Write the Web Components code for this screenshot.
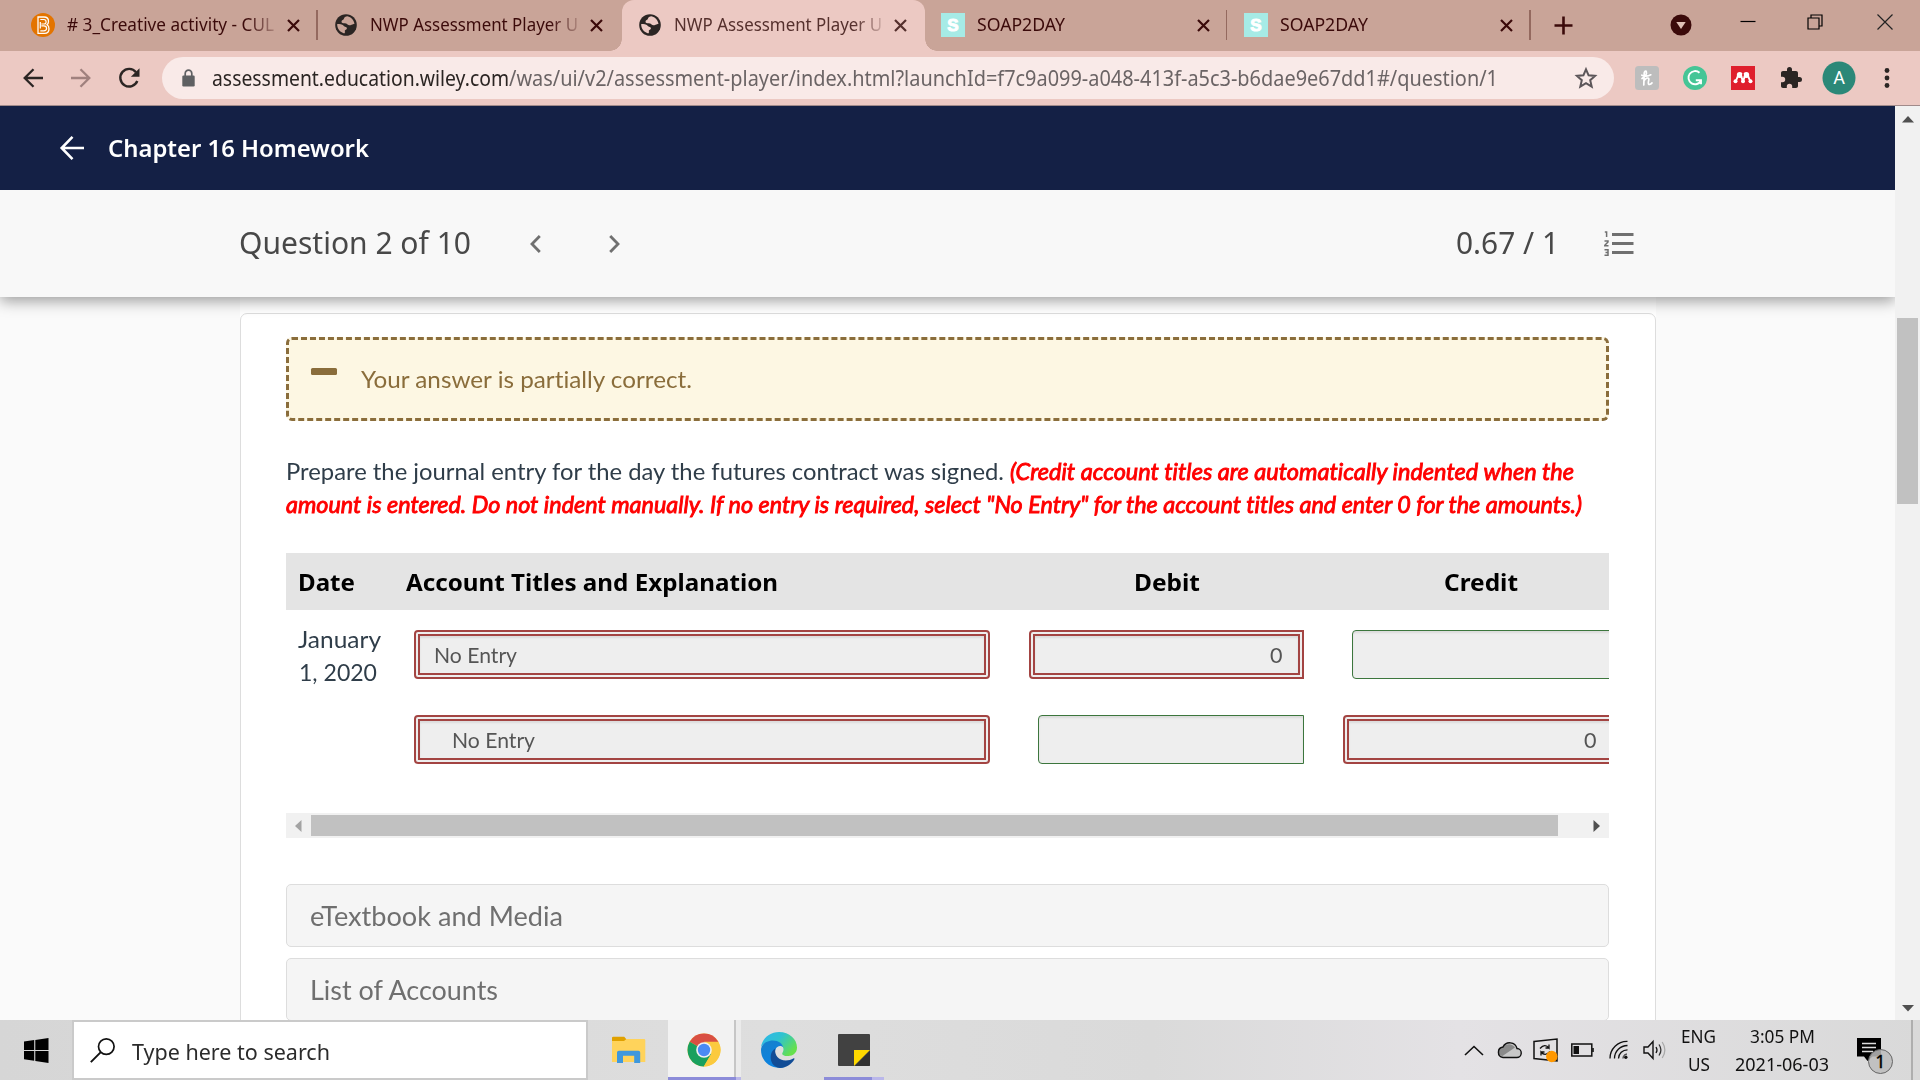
<!DOCTYPE html>
<html lang="en">
<head>
<meta charset="utf-8">
<title>NWP Assessment Player UI</title>
<style>
  body {
    margin: 0;
    width: 1920px;
    height: 1080px;
    overflow: hidden;
    display: flex;
    flex-direction: column;
    font-family: "Noto Sans", "Open Sans", sans-serif;
    background: #fafafa;
  }
  .viewport { display: flex; height: 914px; }
  .page {
    width: 1895px;
    height: 914px;
    overflow: hidden;
    display: flex;
    flex-direction: column;
  }
</style>
</head>
<body>

<tab-strip>
  <browser-tab icon="bfav" label="# 3_Creative activity - CUL" text-width="207" fade></browser-tab>
  <browser-tab icon="globe" label="NWP Assessment Player U" text-width="208" fade divider="none"></browser-tab>
  <browser-tab icon="globe" label="NWP Assessment Player U" text-width="208" fade active></browser-tab>
  <browser-tab icon="sfav" label="SOAP2DAY" text-width="88"></browser-tab>
  <browser-tab icon="sfav" label="SOAP2DAY" text-width="88"></browser-tab>
</tab-strip>
<tool-bar></tool-bar>

<div class="viewport">
  <div class="page">
    <app-header>Chapter 16 Homework</app-header>
    <question-bar></question-bar>
    <content-card>
      <result-alert>Your answer is partially correct.</result-alert>
      <question-text></question-text>
      <journal-table></journal-table>
      <accordion-panel label="eTextbook and Media" text-width="253"></accordion-panel>
      <accordion-panel label="List of Accounts" text-width="188"></accordion-panel>
    </content-card>
  </div>
  <page-scroll></page-scroll>
</div>

<task-bar></task-bar>

<script>
  // every icon is [width, height, svg body]
  const icons = {
    bfav: [24, 24, `<circle cx="12" cy="12" r="12" fill="#e37400"/>
      <path d="M7 4h6q4.500 0 4.500 4.300 0 2.500-1.500 3.400 2 1.200 2 4 0 4.600-4.500 4.600H7z" fill="none" stroke="#fff" stroke-width="1.300"/>
      <path d="M9.300 6.500h3.500q2.300 0 2.300 2.300t-2.300 2.200h-2.500M9.300 17.800h3.500q2.800 0 2.800-2.500t-2.800-2.500h-2.500M9.300 9v6.500" fill="none" stroke="#fff" stroke-width="1.200"/>`],
    globe: [24, 24, `<circle cx="12" cy="12" r="10.800" fill="#2b2523"/>
      <path d="M13.500 3.200c-2 .2-3.300 1-3.600 2.600-.2 1.200-2.200 1-2.400 2.600-.2 1.800 1.600 1.900 3.200 1.900 2.500 0 2.400 1.500 3.700 1.700 1.300.3 2 .6 2.500 0l3.600-1.300c-.6-3.700-3.300-6.700-7-7.500z" fill="var(--tab-bg,#c9a498)"/>
      <path d="M3.200 11c-.2 4.500 2.800 8.300 7 9.400l1-1.300c-1-1.200-.2-2 1-2.600 1-.5 1-2-.3-2.500-1.500-.5-2-.6-2.700-1.700C8.500 11.200 5.500 11 3.200 11z" fill="var(--tab-bg,#c9a498)"/>`],
    sfav: [24, 24, `<rect width="24" height="24" fill="#a6ebe6"/><text x="12" y="18.200" text-anchor="middle" font-family="Liberation Sans" font-size="17" font-weight="700" fill="#fff" stroke="#fff" stroke-width="1">S</text>`],
    close: [13, 13, `<path d="M1 1l11 11M12 1L1 12" stroke="currentColor" stroke-width="2.200"/>`],
    plus: [19, 19, `<path d="M9.500 .5v18M.5 9.500h18" stroke="#3b0a0a" stroke-width="2.600"/>`],
    search_tabs: [22, 22, `<circle cx="11" cy="11" r="10.500" fill="#3b0a0a"/><path d="M6.300 8h9.400L11 15z" fill="#dfc0b6"/>`],
    minimize: [16, 16, `<path d="M.5 7.500h15" stroke="#000" stroke-width="1.200"/>`],
    restore: [16, 16, `<path d="M1 4h11v11H1zM4 4V1h11v11h-3" fill="none" stroke="#000" stroke-width="1.200"/>`],
    win_close: [16, 16, `<path d="M.5 .5l15 15M15.500 .5l-15 15" stroke="#222" stroke-width="1.200"/>`],
    back: [20, 20, `<path d="M20 10H2M10.500 1.200L1.700 10l8.800 8.800" fill="none" stroke="currentColor" stroke-width="2.300"/>`],
    forward: [20, 20, `<path d="M0 10h18M9.500 1.200l8.800 8.800-8.800 8.800" fill="none" stroke="currentColor" stroke-width="2.300"/>`],
    reload: [22, 22, `<path d="M18 5.200A8.800 8.800 0 1 0 19.300 14" fill="none" stroke="#2b2523" stroke-width="2.400"/><path d="M21.500 1.200v8.600h-8.600z" fill="#2b2523"/>`],
    lock: [13, 18, `<rect x=".3" y="6.500" width="12.400" height="11" rx="1.200" fill="#5f6062"/><path d="M3.200 7V4.500a3.300 3.300 0 0 1 6.600 0V7" fill="none" stroke="#5f6062" stroke-width="1.700"/>`],
    star: [22, 22, `<path d="M11 2.300l2.600 6 6.500.6-4.900 4.300 1.500 6.400L11 16.200l-5.700 3.400 1.500-6.400-4.900-4.300 6.500-.6z" fill="none" stroke="#5c5659" stroke-width="2"/>`],
    honey: [24, 24, `<rect width="24" height="24" rx="3.500" fill="#bdbdbd"/><path d="M7 12.500c3-2 5-5 4.300-6.800-.6-1.200-1.800-.3-2.100 1.300L8.800 19M9 15c1-2.600 4.300-4 4.800-2.200.3 1.500-1.200 4-.3 5.300.8.800 2.500 0 3.500-1.200M6.800 9.200c3 1.300 7 .8 9-.4" fill="none" stroke="#fff" stroke-width="1.700" stroke-linecap="round"/>`],
    grammarly: [24, 24, `<circle cx="12" cy="12" r="12" fill="#45c596"/><path d="M16.500 6.800A6.600 6.600 0 1 0 18 14.500M12.800 14.300h5.200v4" fill="none" stroke="#fff" stroke-width="1.900"/>`],
    mendeley: [24, 24, `<rect width="24" height="24" fill="#df1f2d"/><g fill="#fff"><circle cx="8.700" cy="9" r="2.900"/><circle cx="15.300" cy="9" r="2.900"/><circle cx="4.500" cy="15.300" r="2"/><circle cx="12" cy="15.300" r="2"/><circle cx="19.500" cy="15.300" r="2"/></g><path d="M4.700 14.500C6.500 13.500 5.800 9.500 8.500 9.500c2.500 0 2 3.500 3.500 5 1.500-1.500 1-5 3.500-5 2.700 0 2 4 3.800 5" fill="none" stroke="#fff" stroke-width="1.900"/><circle cx="12" cy="9" r="1" fill="#df1f2d"/>`],
    puzzle: [24, 24, `<path d="M20.500 11H19V7c0-1.100-.9-2-2-2h-4V3.500a2.500 2.500 0 0 0-5 0V5H4c-1.100 0-2 .9-2 2v3.800h1.500a2.700 2.700 0 0 1 0 5.400H2V20c0 1.100.9 2 2 2h3.800v-1.500a2.700 2.700 0 0 1 5.400 0V22H17c1.100 0 2-.9 2-2v-4h1.500a2.500 2.500 0 0 0 0-5z" fill="#2b2523"/>`],
    avatar: [34, 34, `<circle cx="17" cy="17" r="16.500" fill="#2b8878"/><text x="17" y="23.300" text-anchor="middle" font-family="Roboto" font-size="18" fill="#fff">A</text>`],
    dots: [6, 22, `<g fill="#2b2523"><circle cx="3" cy="3.500" r="2.400"/><circle cx="3" cy="11" r="2.400"/><circle cx="3" cy="18.500" r="2.400"/></g>`],
    app_back: [24, 24, `<path d="M24 12H2M12.500 .9L1.700 12l10.800 11.100" fill="none" stroke="#fff" stroke-width="2.600"/>`],
    prev: [11, 18, `<path d="M9.800 1L2 9l7.800 8" fill="none" stroke="#707070" stroke-width="2.800"/>`],
    next: [11, 18, `<path d="M1.200 1L9 9l-7.800 8" fill="none" stroke="#707070" stroke-width="2.800"/>`],
    list: [30, 25, `<path d="M8 3.500h21.500M8 12.500h21.500M8 21.500h21.500" stroke="#707070" stroke-width="3"/>
      <path d="M.8 1h1.800v5M.5 10h3.500v1L.8 14.200v.6h3.700M.5 18.700h3.500v5.600H.5M1.500 21.500H4" fill="none" stroke="#707070" stroke-width="1.500"/>`],
    minus: [26, 7, `<rect width="26" height="7" rx="1.500" fill="#8a6d3b"/>`],
    windows: [25, 25, `<path d="M0 3.600l10.200-1.500v9.800H0zM11.300 2L24.500 0v11.900H11.300zM0 13h10.200v9.800L0 21.300zM11.300 13h13.200v12l-13.200-2z" fill="#000"/>`],
    find: [25, 25, `<circle cx="16.300" cy="8.600" r="7.800" fill="none" stroke="#111" stroke-width="1.700"/><path d="M10.800 14.200L.8 24.200" stroke="#111" stroke-width="1.900"/>`],
    explorer: [34, 28, `<path d="M0 2Q0 .8 1.200.8h11L15 4H33v21.500H0z" fill="#e0a100"/><path d="M0 5h12l2.500-2H32q1.300 0 1.300 1.300V26H0z" fill="#ffd35b"/><path d="M5 27V16.500q0-1.800 1.800-1.800h19.600q1.800 0 1.800 1.800V27h-6v-7.300H11V27z" fill="#3f98dd"/>`],
    chrome: [34, 34, `<circle cx="17" cy="17" r="16.500" fill="#fbca3e"/>
      <path d="M17 17L2.700 8.800A16.500 16.500 0 0 1 31.300 8.800z" fill="#d94f43"/>
      <path d="M2.700 8.800A16.500 16.500 0 0 0 16.800 33.500L24.200 21 17 17z" fill="#19a05e"/>
      <path d="M24.200 21L16.800 33.500A16.500 16.500 0 0 0 31.300 8.800H17z" fill="#fbca3e"/>
      <circle cx="17" cy="17" r="7.800" fill="#f1f1f1"/><circle cx="17" cy="17" r="6.200" fill="#4a8af4"/>`],
    edge: [36, 36, `<defs><linearGradient id="e1" x1="0" y1="0" x2="1" y2=".6"><stop offset="0" stop-color="#2fb5ee"/><stop offset=".5" stop-color="#2fc3cf"/><stop offset="1" stop-color="#66e04c"/></linearGradient>
      <linearGradient id="e2" x1="0" y1="0" x2=".4" y2="1"><stop offset="0" stop-color="#1680cb"/><stop offset="1" stop-color="#0b83e2"/></linearGradient></defs>
      <path d="M0 15C1.500 5.500 9.500 0 18 0c10.500 0 18 7.300 18 15.500 0 5.500-4 8.500-8.700 8.500-4.800 0-6.500-1.500-6-2.800 1-2 1.500-3.500 1-5C21.500 12.500 18 9.700 12.500 9.500 6 9.500 2 12 0 15z" fill="url(#e1)"/>
      <path d="M0 18c0-5.500 5.500-9.500 12-9.500 5.500.2 9.500 3 10.300 7-1.500-2-6.300-2.500-8 2.500-2 8 3.500 15 9.500 17C12.500 38.500 0 31 0 18z" fill="url(#e2)"/>
      <path d="M14.300 16.500c-1.300 6.500 3.500 12 10.500 12 3 0 5.500-.7 7.500-2 .8-.4 1.500.2 1 1C30.500 32 25 36 19 36 12 35.500 9 29 9.800 23.500c.5-3.500 2.200-5.700 4.500-7z" fill="#114c96"/>`],
    sticky: [32, 32, `<rect width="32" height="32" rx="1" fill="#414141"/><path d="M16 32V16h16z" fill="#ffd900"/><path d="M17 32h14q1 0 1-1V17z" fill="#303030"/>`],
    up: [20, 11, `<path d="M1 10l9-8.500L19 10" fill="none" stroke="#111" stroke-width="1.600"/>`],
    cloud: [25, 18, `<path d="M6 16.500h13.500a4.500 4.500 0 0 0 .5-9 7.500 7.500 0 0 0-14-1.500A5.300 5.300 0 0 0 6 16.500z" fill="#c8c8c8"/><path d="M1 10q1-4 5-4a7.500 7.500 0 0 1 12 .5L5.500 15Q1 14.500 1 10z" fill="#8a8a8a"/><path d="M6 16.500h13.500a4.500 4.500 0 0 0 .5-9 7.500 7.500 0 0 0-14-1.500A5.300 5.300 0 0 0 6 16.500z" fill="none" stroke="#111" stroke-width="1.400"/>`],
    update: [26, 25, `<path d="M1 3.500L24 1v22L1 20.500z" fill="none" stroke="#111" stroke-width="1.500"/><path d="M7 10.500q5-5.500 9-.5v-3.500M16 10h-3.500M17 13.500q-5 5.500-9 .5v3.500M8 14h3.500" fill="none" stroke="#111" stroke-width="1.300"/><circle cx="18.800" cy="18.500" r="5.700" fill="#ff9800"/>`],
    battery: [23, 14, `<rect x=".8" y="1" width="20" height="12" fill="none" stroke="#111" stroke-width="1.500"/><path d="M2.500 3h5.500v8H2.500z" fill="#111"/><path d="M22 5v4" stroke="#111" stroke-width="1.600"/>`],
    wifi: [20, 20, `<g fill="none" stroke="#111" stroke-width="1.300"><path d="M1 18.500A17 17 0 0 1 18.500 1.300"/><path d="M5.500 18.500A13 13 0 0 1 18.500 5.500"/><path d="M9.500 18.500A9 9 0 0 1 18.500 9.800"/></g><path d="M14 18.500A4.500 4.500 0 0 1 18 14" fill="none" stroke="#111" stroke-width="1"/><circle cx="16.800" cy="17.300" r="1.700" fill="#111"/>`],
    sound: [24, 20, `<path d="M1 7h4l5-5.500v17L5 13H1z" fill="none" stroke="#111" stroke-width="1.400"/><path d="M13 7q2 3 0 6" fill="none" stroke="#111" stroke-width="1.300"/><path d="M16 4.500q3.800 5.500 0 11" fill="none" stroke="#333" stroke-width="1.300"/><path d="M19.200 2q5.300 8 0 16" fill="none" stroke="#aaa" stroke-width="1.300"/>`],
    action: [38, 38, `<path d="M1 1h24v18.500H16.500L11.500 24 8 19.500H1z" fill="#000"/><path d="M6 6.500h14M6 10.500h14M6 14.500h11" stroke="#ddd" stroke-width="1.400"/><circle cx="24.500" cy="24.500" r="12" fill="#bcbcbc" fill-opacity=".85" stroke="#666" stroke-width="1"/><text x="24.500" y="31" text-anchor="middle" font-family="Noto Sans" font-size="18" fill="#000" stroke="#000" stroke-width=".4">1</text>`],
    tri_up: [12, 7, `<path d="M0 6.500L6 0l6 6.500z" fill="#505050"/>`],
    tri_down: [12, 7, `<path d="M0 0h12L6 6.500z" fill="#505050"/>`],
    tri_left: [7, 12, `<path d="M6.500 0v12L0 6z" fill="#a3a3a3"/>`],
    tri_right: [7, 12, `<path d="M.5 0v12L7 6z" fill="#505050"/>`]
  };

  const define = (name, html, setup) => {
    const template = document.createElement('template');
    template.innerHTML = html;
    customElements.define(name, class extends HTMLElement {
      connectedCallback() {
        if (this.shadowRoot) return;
        const root = this.attachShadow({ mode: 'open' });
        root.appendChild(template.content.cloneNode(true));
        if (setup) setup(this, root);
      }
    });
  };

  define('ui-icon', `<style>:host{display:block;flex:none;line-height:0} svg{display:block;overflow:visible}</style>`, (el, root) => {
    const [w, h, body] = icons[el.getAttribute('name')];
    const box = document.createElement('div');
    box.innerHTML = `<svg width="${w}" height="${h}" viewBox="0 0 ${w} ${h}">${body}</svg>`;
    root.appendChild(box);
  });

  // one line of text, squeezed or stretched to the width attribute
  define('fit-text', `<style>
      :host{display:block;flex:none;white-space:nowrap}
      span{display:inline-block;transform-origin:0 50%}
    </style><span><slot></slot></span>`, (el, root) => {
    const width = parseFloat(el.getAttribute('width'));
    const span = root.querySelector('span');
    el.style.width = width + 'px';
    span.style.transform = `scaleX(${width / span.getBoundingClientRect().width})`;
  });

  define('browser-tab', `<style>
      :host{display:block;position:relative;box-sizing:border-box;width:303.3px;height:51px;color:#3b0a0a}
      :host([active]){--tab-bg:#ecc9c3;background:#ecc9c3;border-radius:12px 12px 0 0;color:#55302d}
      :host([active])::before,:host([active])::after{content:"";position:absolute;bottom:0;width:12px;height:12px}
      :host([active])::before{left:-12px;background:radial-gradient(circle at 0 0,transparent 11.5px,#ecc9c3 12px)}
      :host([active])::after{right:-12px;background:radial-gradient(circle at 100% 0,transparent 11.5px,#ecc9c3 12px)}
      .row{display:flex;align-items:center;height:50px;padding-left:16px}
      .label{width:210px;margin:-2px 10px 0 12px;font-size:18px;line-height:28px;overflow:hidden}
      :host([fade]) .label{-webkit-mask-image:linear-gradient(90deg,#000 180px,transparent 215px)}
      .line{width:1.5px;height:30px;margin-left:16px;background:#94695f}
      :host([active]) .line,:host([divider=none]) .line{display:none}
    </style>
    <div class="row"></div>`, (el, root) => {
    root.querySelector('.row').innerHTML = `<ui-icon name="${el.getAttribute('icon')}"></ui-icon>
      <div class="label"><fit-text width="${el.getAttribute('text-width')}">${el.getAttribute('label')}</fit-text></div>
      <ui-icon name="close"></ui-icon><div class="line"></div>`;
  });

  define('tab-strip', `<style>
      :host{display:flex;height:51px;background:#c9a498;padding-left:15px;box-sizing:border-box;flex:none}
      .controls{display:flex;align-items:center;height:50px;padding-left:23px}
      .win{padding-bottom:7px}
    </style>
    <slot></slot>
    <div class="controls">
      <ui-icon name="plus"></ui-icon>
      <ui-icon name="search_tabs" style="margin-left:97px"></ui-icon>
      <ui-icon class="win" name="minimize" style="margin-left:48px"></ui-icon>
      <ui-icon class="win" name="restore" style="margin-left:51px"></ui-icon>
      <ui-icon class="win" name="win_close" style="margin-left:54px"></ui-icon>
    </div>`);

  define('tool-bar', `<style>
      :host{display:flex;align-items:center;box-sizing:border-box;height:55px;background:#ecc9c3;border-bottom:1px solid #a08a8a;padding:0 0 1px 23px;flex:none;color:#2b2523}
      .url{display:flex;align-items:center;box-sizing:border-box;width:1452px;height:42px;border-radius:21px;background:#f9eae8;margin-left:22px;padding-left:20px;font-size:21px;line-height:30px}
      .url fit-text{margin-top:1px}
      .path{color:#6b6465}
    </style>
    <ui-icon name="back"></ui-icon>
    <ui-icon name="forward" style="margin-left:28px;color:#a0817e"></ui-icon>
    <ui-icon name="reload" style="margin-left:27px"></ui-icon>
    <div class="url">
      <ui-icon name="lock"></ui-icon>
      <fit-text width="297" style="margin-left:17px">assessment.education.wiley.com</fit-text>
      <fit-text class="path" width="989">/was/ui/v2/assessment-player/index.html?launchId=f7c9a099-a048-413f-a5c3-b6dae9e67dd1#/question/1</fit-text>
      <ui-icon name="star" style="margin-left:77px"></ui-icon>
    </div>
    <ui-icon name="honey" style="margin-left:21px"></ui-icon>
    <ui-icon name="grammarly" style="margin-left:24px"></ui-icon>
    <ui-icon name="mendeley" style="margin-left:24px"></ui-icon>
    <ui-icon name="puzzle" style="margin-left:24px"></ui-icon>
    <ui-icon name="avatar" style="margin-left:19px"></ui-icon>
    <ui-icon name="dots" style="margin-left:28px"></ui-icon>`);

  define('app-header', `<style>
      :host{display:flex;align-items:center;height:84px;background:#142045;color:#fff;padding-left:60px;gap:24px;font-size:24px;font-weight:600;line-height:34px;flex:none}
    </style>
    <ui-icon name="app_back"></ui-icon><fit-text width="261"><slot></slot></fit-text>`);

  define('question-bar', `<style>
      :host{display:flex;align-items:center;position:relative;z-index:1;box-sizing:border-box;height:107px;background:#f8f8f8;box-shadow:0 4px 14px rgba(0,0,0,.38);clip-path:inset(0 0 -30px 0);padding-left:239px;color:#484848;font-size:30px;line-height:42px;flex:none}
      fit-text{margin-top:-1px}
    </style>
    <fit-text width="232">Question 2 of 10</fit-text>
    <ui-icon name="prev" style="margin-left:59px"></ui-icon>
    <ui-icon name="next" style="margin-left:68px"></ui-icon>
    <fit-text width="103" style="margin-left:836px">0.67 / 1</fit-text>
    <ui-icon name="list" style="margin:-1px 0 0 45px"></ui-icon>`);

  define('content-card', `<style>
      :host{display:block;width:1416px;margin-left:240px;background:#fff;padding-top:16px;box-sizing:border-box;font-family:Lato,sans-serif;font-variant-ligatures:none;flex:none;height:760px}
      .card{box-sizing:border-box;height:760px;border:1px solid #ddd;border-radius:7px;padding:23px 46px 0 45px;overflow:hidden}
    </style>
    <div class="card"><slot></slot></div>`);

  define('result-alert', `<style>
      :host{display:flex;box-sizing:border-box;height:84px;border:3px dashed #8a6d3b;border-radius:6px;background:#fdf7e3;color:#8a6d3b;padding:28px 0 0 22px;font-size:24px;line-height:22px}
      fit-text{margin:0 0 0 24px}
    </style>
    <ui-icon name="minus"></ui-icon><fit-text width="331"><slot></slot></fit-text>`);

  define('question-text', `<style>
      :host{display:block;margin-top:33px;height:99px;font-size:24px;line-height:33px;color:#2f3d49}
      .line{display:flex;gap:6px}
      .red{color:red;font-style:italic;-webkit-text-stroke:.9px red}
    </style>
    <div class="line"><fit-text width="718">Prepare the journal entry for the day the futures contract was signed.</fit-text>
      <fit-text class="red" width="564">(Credit account titles are automatically indented when the</fit-text></div>
    <div class="line"><fit-text class="red" width="1296">amount is entered. Do not indent manually. If no entry is required, select "No Entry" for the account titles and enter 0 for the amounts.)</fit-text></div>`);

  // graded field: wrong answers get the double red frame, right ones a thin green line
  define('answer-box', `<style>
      :host{display:flex;align-items:center;flex:none;box-sizing:border-box;height:49px;background:#eee;color:#555;font-size:21px;line-height:28px;border:1px solid #3c763d;border-radius:4px 0 0 4px;box-shadow:inset 0 2px 2px rgba(0,0,0,.08)}
      :host([wrong]){border:6px double #a34442}
      :host([full]){border-radius:4px}
      fit-text{margin-left:var(--indent,15px)}
    </style>`, (el, root) => {
    if (!el.hasAttribute('value')) return;
    root.appendChild(document.createRange().createContextualFragment(
      `<fit-text width="${el.getAttribute('text-width')}">${el.getAttribute('value')}</fit-text>`));
  });

  define('journal-table', `<style>
      :host{display:block;width:1323px;height:331px;color:#2f3d49;font-size:24px;line-height:33px}
      .clip{overflow:hidden;height:260px}
      .head{display:flex;align-items:center;height:57px;background:#e4e4e4;color:#000;font-family:"Noto Sans",sans-serif;font-weight:bold;padding-left:12px}
      .row{display:flex;height:85px;padding-top:20px;box-sizing:border-box}
      .date{width:84px;margin:-8px 32px 0 12px;flex:none}
      .date fit-text:last-child{margin-left:1px}
      .bar{display:flex;align-items:center;box-sizing:border-box;height:25px;background:#f1f1f1;padding-left:9px}
      .thumb{width:1247px;height:21px;background:#c1c1c1;margin:0 35px 0 9px}
    </style>
    <div class="clip">
      <div class="head">
        <fit-text width="57">Date</fit-text>
        <fit-text width="372" style="margin-left:51px">Account Titles and Explanation</fit-text>
        <fit-text width="66" style="margin-left:356px">Debit</fit-text>
        <fit-text width="74" style="margin-left:244px">Credit</fit-text>
      </div>
      <div class="row">
        <div class="date"><fit-text width="83">January</fit-text><fit-text width="78">1, 2020</fit-text></div>
        <answer-box wrong full value="No Entry" text-width="83" style="width:576px;--indent:14px"></answer-box>
        <answer-box wrong value="0" text-width="12.500" style="width:275px;margin-left:39px;--indent:235px"></answer-box>
        <answer-box style="width:267px;margin-left:48px"></answer-box>
      </div>
      <div class="row">
        <div class="date"></div>
        <answer-box wrong full value="No Entry" text-width="83" style="width:576px;--indent:32px"></answer-box>
        <answer-box style="width:266px;margin-left:48px"></answer-box>
        <answer-box wrong value="0" text-width="12.500" style="width:276px;margin-left:39px;--indent:235px"></answer-box>
      </div>
    </div>
    <div class="bar"><ui-icon name="tri_left"></ui-icon><div class="thumb"></div><ui-icon name="tri_right"></ui-icon></div>`);

  define('accordion-panel', `<style>
      :host{display:flex;align-items:center;box-sizing:border-box;height:63px;margin-bottom:11px;border:1px solid #ddd;border-radius:5px;background:#f5f5f5;color:#6f6f6f;padding:0 0 0 23px;font-size:27px;line-height:34px}
    </style>`, (el, root) => {
    root.appendChild(document.createRange().createContextualFragment(
      `<fit-text width="${el.getAttribute('text-width')}">${el.getAttribute('label')}</fit-text>`));
  });

  define('page-scroll', `<style>
      :host{display:flex;flex-direction:column;align-items:center;box-sizing:border-box;width:25px;height:914px;background:#f1f1f1;padding-top:10px}
      .thumb{width:21px;height:186px;background:#c1c1c1;margin:195px 0 501px}
    </style>
    <ui-icon name="tri_up"></ui-icon><div class="thumb"></div><ui-icon name="tri_down"></ui-icon>`);

  define('task-bar', `<style>
      :host{display:flex;align-items:center;height:60px;background:linear-gradient(90deg,#d6d6d6,#dedede 40%,#dadada 60%,#e4e2e5 76%,#d9d9d9);color:#111;flex:none}
      .search{display:flex;align-items:center;box-sizing:border-box;width:516px;height:60px;margin-left:23px;border:2px solid #cacaca;background:#fff;padding-left:16px;font-size:21px;line-height:30px;color:#2b2b2b}
      .app{box-sizing:border-box;height:60px;display:flex;align-items:center;justify-content:center;border-bottom:3px solid transparent}
      .open{width:66px;background:#f2f2f2;border-color:#8c8cd9;padding:3px 0 0 6px}
      .s1{width:2px;height:57px;background:#c6c6c6;border-bottom:3px solid #8c8cd9}
      .s2{width:5px;height:57px;background:#ebebeb;border-bottom:3px solid #bab7ea}
      .note{width:48px;border-color:#8c8cd9;padding-top:3px}
      .more{width:12px;height:57px;border-bottom:3px solid #bab7ea}
      .two{display:flex;flex-direction:column;align-items:center;font-size:18px;line-height:28px}
      .edge{width:2px;height:60px;background:#aeaeae}
    </style>
    <ui-icon name="windows" style="margin-left:24px"></ui-icon>
    <div class="search"><ui-icon name="find"></ui-icon><fit-text width="198" style="margin:3px 0 0 17px">Type here to search</fit-text></div>
    <ui-icon name="explorer" style="margin-left:24px"></ui-icon>
    <div class="app open" style="margin-left:22px"><ui-icon name="chrome"></ui-icon></div><div class="s1"></div><div class="s2"></div>
    <ui-icon name="edge" style="margin-left:20px"></ui-icon>
    <div class="app note" style="margin-left:27px"><ui-icon name="sticky" style="margin-left:12px"></ui-icon></div><div class="more"></div>
    <ui-icon name="up" style="margin-left:580px"></ui-icon>
    <ui-icon name="cloud" style="margin-left:13px"></ui-icon>
    <ui-icon name="update" style="margin-left:11px"></ui-icon>
    <ui-icon name="battery" style="margin-left:12px"></ui-icon>
    <ui-icon name="wifi" style="margin-left:15px"></ui-icon>
    <ui-icon name="sound" style="margin-left:14px"></ui-icon>
    <div class="two" style="margin-left:14px"><fit-text width="35">ENG</fit-text><fit-text width="22">US</fit-text></div>
    <div class="two" style="margin-left:19px"><fit-text width="65">3:05 PM</fit-text><fit-text width="94">2021-06-03</fit-text></div>
    <ui-icon name="action" style="margin:12px 0 0 27px"></ui-icon>
    <div class="edge" style="margin-left:17px"></div>`);
</script>
</body>
</html>
